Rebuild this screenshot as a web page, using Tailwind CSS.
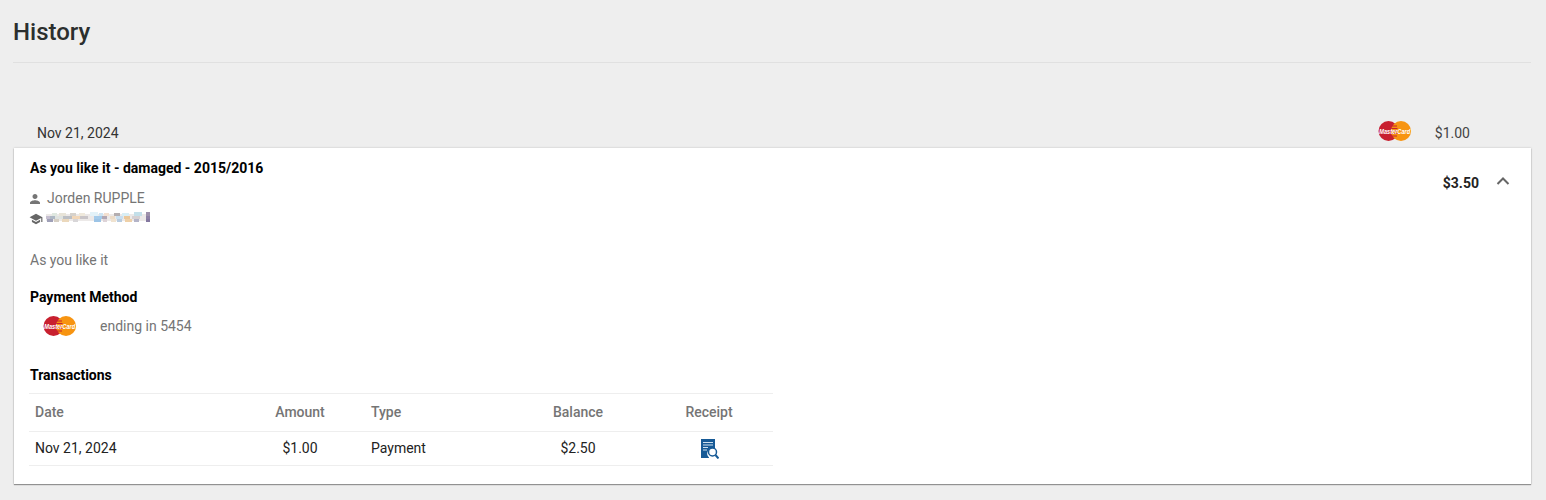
<!DOCTYPE html>
<html><head><meta charset="utf-8"><script src="https://cdn.jsdelivr.net/npm/@tailwindcss/browser@4"></script></head>
<body class="bg-[#eeeeee] font-['Roboto',sans-serif] text-[14px] h-[500px] overflow-hidden">
<div class="pl-[13px] pr-[15px]">
  <div class="h-[63px] border-b border-[#e0e0e0] pt-[16px]">
    <h1 class="text-[24px] leading-[32px] font-medium text-[#2b2f2e]">History</h1>
  </div>
  <div class="h-[85px] flex items-end">
    <div class="flex items-center w-full h-[30px] text-[#333]">
      <span class="ml-[24px] leading-[30px]">Nov 21, 2024</span>
      <svg class="ml-auto mt-[-4px] overflow-visible" width="34" height="20" viewBox="0 0 34 20"><circle cx="10.500" cy="10" r="10" fill="#c8202f"/><circle cx="23" cy="10" r="10" fill="#f79411"/><path d="M14 5h5M13.500 7.500h6M13 10h7M13.500 12.500h6M14 15h5" stroke="#c8202f" stroke-width="1"/><text x="16.700" y="12.500" text-anchor="middle" font-size="6.500" font-weight="700" font-style="italic" fill="#fff" font-family="Liberation Sans" textLength="31" lengthAdjust="spacingAndGlyphs">MasterCard</text></svg>
      <span class="ml-[23px] mr-[61px] leading-[30px] text-[#444]">$1.00</span>
    </div>
  </div>
  <div class="ml-[1px] h-[336px] bg-white shadow-[0_1px_1px_rgba(0,0,0,0.35),0_0_2px_rgba(0,0,0,0.2)] relative pl-[16px] pt-[10px]">
    <div class="text-[14px] leading-[20px] font-bold text-black">As you like it - damaged - 2015/2016</div>
    <div class="absolute right-[52px] top-[25px] text-[14px] leading-[20px] font-bold text-[#222]">$3.50</div>
    <svg class="absolute right-[20px] top-[25px]" width="16" height="16" viewBox="0 0 16 16" fill="none" stroke="#666" stroke-width="2"><path d="M2.500 11 8 5.500l5.500 5.500"/></svg>
    <div class="mt-[10px] flex items-center h-[20px] text-[#757575]">
      <svg width="12" height="12" viewBox="0 0 24 24" fill="#757575" class="mr-[5px] ml-[-1px] mt-[1px]"><path d="M12 12c2.800 0 5-2.200 5-5s-2.200-5-5-5-5 2.200-5 5 2.200 5 5 5zm0 2.500c-3.300 0-10 1.700-10 5V22h20v-2.500c0-3.300-6.700-5-10-5z"/></svg>
      <span class="ml-[1px]">Jorden RUPPLE</span>
    </div>
    <div class="flex items-center h-[18px]">
      <svg width="14" height="14" viewBox="0 0 24 24" fill="#666" class="ml-[-1px] mt-[3px]"><path d="M5 13.200v4L12 21l7-3.800v-4L12 17l-7-3.800zM12 3 1 9l11 6 9-4.900V17h2V9L12 3z"/></svg>
      <svg class="ml-[3px] mt-[1px]" width="104" height="12" viewBox="0 0 104 12">
        <rect x="0" y="2" width="104" height="7" fill="#ece9e8"/>
        <g>
          <rect x="6" y="1" width="5" height="3" fill="#dfe8e0"/><rect x="13" y="1" width="7" height="3" fill="#e8e4d8"/><rect x="24" y="1" width="6" height="3" fill="#d6d2cc"/><rect x="33" y="1" width="6" height="3" fill="#efe9dc"/><rect x="44" y="0" width="8" height="4" fill="#e3f2f8"/><rect x="53" y="1" width="4" height="3" fill="#cfe5f3"/><rect x="58" y="1" width="5" height="3" fill="#f3e0d0"/><rect x="68" y="1" width="6" height="3" fill="#b4aeb0"/><rect x="76" y="1" width="7" height="3" fill="#d8eef5"/><rect x="88" y="0" width="8" height="4" fill="#c3dfe9"/><rect x="100" y="0" width="4" height="4" fill="#9d90aa"/>
          <rect x="0" y="4" width="4" height="3" fill="#c5bfd0"/><rect x="4" y="4" width="5" height="3" fill="#aeb8c4"/><rect x="9" y="4" width="8" height="3" fill="#dfe3e0"/><rect x="17" y="4" width="9" height="3" fill="#bcbfc4"/><rect x="26" y="4" width="8" height="3" fill="#f2d7b8"/><rect x="34" y="4" width="8" height="3" fill="#c9c5c8"/><rect x="48" y="4" width="8" height="3" fill="#a4cbea"/><rect x="56" y="4" width="5" height="3" fill="#b2a8b4"/><rect x="64" y="4" width="5" height="3" fill="#ecdcc8"/><rect x="70" y="4" width="7" height="3" fill="#c9dff0"/><rect x="78" y="4" width="6" height="3" fill="#eac79a"/><rect x="86" y="4" width="8" height="3" fill="#d5d0d2"/><rect x="100" y="4" width="4" height="3" fill="#8d80a4"/>
          <rect x="1" y="7" width="6" height="3" fill="#9fa0b8"/><rect x="8" y="7" width="5" height="3" fill="#d6cfc4"/><rect x="16" y="7" width="7" height="3" fill="#ebd8bc"/><rect x="27" y="7" width="5" height="3" fill="#d8d6d8"/><rect x="48" y="7" width="7" height="3" fill="#9cc4e6"/><rect x="57" y="7" width="4" height="3" fill="#ddd3d8"/><rect x="65" y="7" width="5" height="3" fill="#f0e3d0"/><rect x="71" y="7" width="5" height="3" fill="#b8cce0"/><rect x="79" y="7" width="7" height="3" fill="#eed0a8"/><rect x="88" y="7" width="5" height="3" fill="#b4b4c8"/><rect x="100" y="7" width="4" height="3" fill="#8478a0"/>
        </g>
      </svg>
    </div>
    <div class="mt-[24px] leading-[20px] text-[#757575]">As you like it</div>
    <div class="mt-[17px] leading-[20px] font-bold text-black">Payment Method</div>
    <div class="flex items-center h-[28px] mt-[5px]">
      <svg class="ml-[13px] overflow-visible" width="34" height="20" viewBox="0 0 34 20"><circle cx="10.500" cy="10" r="10" fill="#c8202f"/><circle cx="23" cy="10" r="10" fill="#f79411"/><path d="M14 5h5M13.500 7.500h6M13 10h7M13.500 12.500h6M14 15h5" stroke="#c8202f" stroke-width="1"/><text x="16.700" y="12.500" text-anchor="middle" font-size="6.500" font-weight="700" font-style="italic" fill="#fff" font-family="Liberation Sans" textLength="31" lengthAdjust="spacingAndGlyphs">MasterCard</text></svg>
      <span class="ml-[23px] text-[#757575]">ending in 5454</span>
    </div>
    <div class="mt-[25px] leading-[20px] font-bold text-black">Transactions</div>
    <table class="mt-[8px] ml-[-1px] w-[744px] table-fixed border-collapse text-[14px]">
      <colgroup><col class="w-[200px]"><col class="w-[142px]"><col class="w-[140px]"><col class="w-[134px]"><col class="w-[128px]"></colgroup>
      <thead><tr class="h-[38px] border-y border-[#eeeeee] text-[#757575]">
        <th class="pl-[6px] text-left font-medium">Date</th><th class="font-medium text-center">Amount</th><th class="text-left font-medium">Type</th><th class="font-medium">Balance</th><th class="font-medium">Receipt</th>
      </tr></thead>
      <tbody><tr class="h-[34px] border-b border-[#eeeeee] text-[#222]">
        <td class="pl-[6px]">Nov 21, 2024</td><td class="text-center">$1.00</td><td>Payment</td><td class="text-center">$2.50</td>
        <td class="pl-[1px]"><svg class="mx-auto mt-[1px]" width="18" height="20" viewBox="0 0 18 20"><path d="M0 0h14v9.500a5.500 5.500 0 0 0-6 9V19H0z" fill="#175a96"/><path d="M2 3.500h10M2 6h10M2 8.500h5M2 11h4" stroke="#cfe0ef" stroke-width="1"/><circle cx="11.500" cy="13" r="4" fill="#fff" stroke="#175a96" stroke-width="1.500"/><path d="M14.500 16 17.500 19.500" stroke="#175a96" stroke-width="2"/></svg></td>
      </tr></tbody>
    </table>
  </div>
</div>
</body></html>
